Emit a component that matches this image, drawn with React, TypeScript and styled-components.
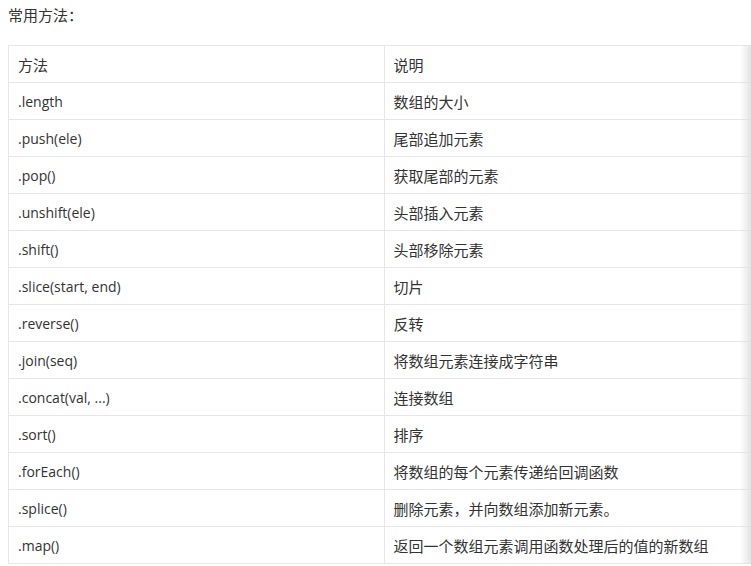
import * as React from "react";
import styled, { createGlobalStyle } from "styled-components";

type Method = {
  name: string;
  desc: string;
};

const methods: Method[] = [
  { name: ".length", desc: "数组的大小" },
  { name: ".push(ele)", desc: "尾部追加元素" },
  { name: ".pop()", desc: "获取尾部的元素" },
  { name: ".unshift(ele)", desc: "头部插入元素" },
  { name: ".shift()", desc: "头部移除元素" },
  { name: ".slice(start, end)", desc: "切片" },
  { name: ".reverse()", desc: "反转" },
  { name: ".join(seq)", desc: "将数组元素连接成字符串" },
  { name: ".concat(val, ...)", desc: "连接数组" },
  { name: ".sort()", desc: "排序" },
  { name: ".forEach()", desc: "将数组的每个元素传递给回调函数" },
  { name: ".splice()", desc: "删除元素，并向数组添加新元素。" },
  { name: ".map()", desc: "返回一个数组元素调用函数处理后的值的新数组" },
];

const GlobalStyle = createGlobalStyle`
  html, body {
    margin: 0;
    padding: 0;
    background: #fff;
  }
  body {
    font-family: "Open Sans", "Noto Sans CJK SC", sans-serif;
    color: #333;
  }
`;

export default function App() {
  return (
    <Page>
      <GlobalStyle />
      <Heading>常用方法：</Heading>
      <TableWrap>
        <Table>
          <thead>
            <Row>
              <Cell as="th" $cjk>方法</Cell>
              <Cell as="th" $cjk>说明</Cell>
            </Row>
          </thead>
          <tbody>
            {methods.map((m) => (
              <Row key={m.name}>
                <Cell>{m.name}</Cell>
                <Cell $cjk>{m.desc}</Cell>
              </Row>
            ))}
          </tbody>
        </Table>
        <Shade />
      </TableWrap>
    </Page>
  );
}

const Page = styled.div`
  padding: 4px 0 0 8px;
  width: 743px;
  height: 562px;
  overflow: hidden;
`;

const Heading = styled.p`
  margin: 0 0 19px 0;
  font-size: 15px;
  line-height: 22px;
  font-family: "Noto Sans CJK SC", sans-serif;
  color: #333;
`;

const TableWrap = styled.div`
  position: relative;
  width: 743px;
  overflow: hidden;
`;

const Table = styled.table`
  width: 752px;
  border-collapse: collapse;
  table-layout: fixed;
  font-size: 14px;
`;

const Row = styled.tr`
  height: 37px;
`;

const Cell = styled.td<{ $cjk?: boolean }>`
  width: 50%;
  box-sizing: border-box;
  border: 1px solid #e6e6e6;
  padding: 0 9px;
  height: 37px;
  text-align: left;
  font-weight: 400;
  font-size: ${(p) => (p.$cjk ? "15px" : "14px")};
  font-family: ${(p) =>
    p.$cjk ? '"Noto Sans CJK SC", sans-serif' : '"Open Sans", "Noto Sans CJK SC", sans-serif'};
  color: #333;
  white-space: nowrap;
  vertical-align: middle;
`;

const Shade = styled.div`
  position: absolute;
  top: 0;
  right: 0;
  bottom: 0;
  width: 11px;
  background: linear-gradient(to right, rgba(235, 235, 235, 0), rgba(225, 225, 225, 0.9));
  pointer-events: none;
`;
